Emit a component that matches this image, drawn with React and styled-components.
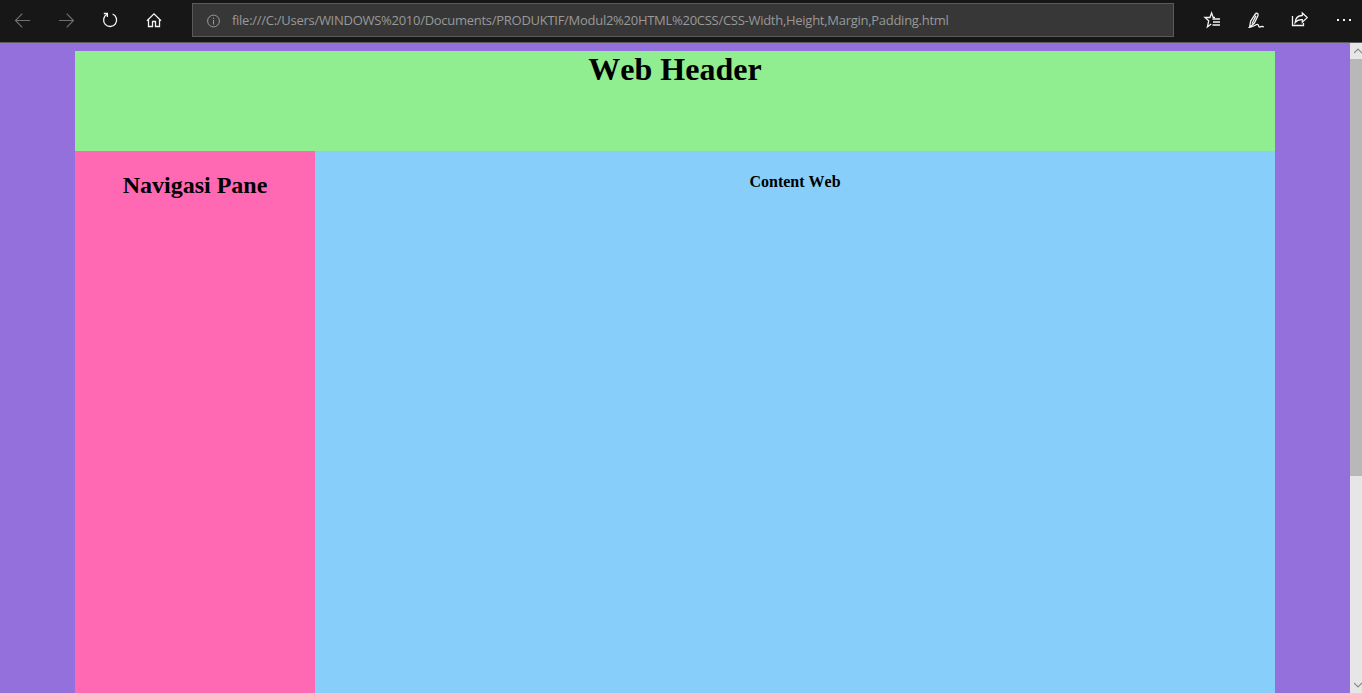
import React from "react";
import styled, { createGlobalStyle } from "styled-components";

const GlobalStyle = createGlobalStyle`
  * { box-sizing: border-box; }
  body { margin: 0; overflow: hidden; }
`;

const Window = styled.div`
  display: flex;
  flex-direction: column;
  width: 1362px;
  height: 693px;
  overflow: hidden;
`;

const Toolbar = styled.header`
  display: flex;
  flex: none;
  height: 43px;
  padding-top: 3px;
  background: #171717;
  border-bottom: 1px solid #5b5b5b;
`;

const ToolButton = styled.button`
  display: flex;
  align-items: center;
  justify-content: center;
  flex: none;
  width: 44px;
  height: 34px;
  padding: 0;
  border: 0;
  background: none;
  color: ${(p) => (p.$disabled ? "#707070" : "#f4f4f4")};
`;

const NavButtons = styled.nav`
  display: flex;
  flex: none;
  width: 192px;
`;

const Actions = styled.div`
  display: flex;
  flex: none;
  width: 188px;
  padding-left: 16px;
`;

const AddressBar = styled.div`
  display: flex;
  align-items: center;
  flex: none;
  width: 982px;
  height: 34px;
  padding-left: 13px;
  gap: 11px;
  background: #373737;
  border: 1px solid #5a5a5a;
  color: #999;
`;

const Url = styled.span`
  font: 13px/18px "Open Sans", "Noto Sans", sans-serif;
  letter-spacing: -0.275px;
  white-space: nowrap;
`;

const Icon = styled.svg`
  display: block;
  flex: none;
  fill: none;
  stroke: currentColor;
  stroke-width: ${(p) => p.$weight || 1.2};
`;

const Viewport = styled.div`
  display: flex;
  flex: 1;
  min-height: 0;
`;

const Page = styled.main`
  width: 1350px;
  padding: 8px 75px 0;
  background: #9370db;
  color: #000;
  font-family: "Liberation Serif", "Times New Roman", serif;
  font-kerning: none;
  text-align: center;
`;

const WebHeader = styled.section`
  height: 100px;
  background: #90ee90;
`;

const Columns = styled.div`
  display: flex;
  height: 542px;
`;

const NavigationPane = styled.aside`
  width: 240px;
  padding-top: 21px;
  background: #ff69b4;
`;

const Content = styled.section`
  flex: 1;
  padding-top: 21px;
  background: #87cefa;
`;

const Title = styled.h1`
  margin: 0;
  font-size: 32px;
  line-height: 37px;
`;

const PaneTitle = styled.h2`
  margin: 0;
  font-size: 24px;
  line-height: 27px;
`;

const ContentTitle = styled.h4`
  margin: 0;
  font-size: 16px;
  line-height: 19px;
`;

const Scrollbar = styled.div`
  display: flex;
  flex-direction: column;
  justify-content: space-between;
  width: 12px;
  background: #e6e6e6;
  color: #8a8a8a;
`;

const ScrollArrow = styled.div`
  display: flex;
  align-items: center;
  height: 16px;
  padding-left: 4px;
`;

const ScrollTrack = styled.div`
  flex: 1;
`;

const ScrollThumb = styled.div`
  height: 417px;
  background: #b8b8b8;
`;

export default function App() {
  return (
    <Window>
      <GlobalStyle />
      <Toolbar>
        <NavButtons>
          <ToolButton $disabled aria-label="Back">
            <Icon width="16" height="16" viewBox="0 0 16 16">
              <path d="M16 8.5H1.7M8.3 1.7L1.5 8.5L8.3 15.3" />
            </Icon>
          </ToolButton>
          <ToolButton $disabled aria-label="Forward">
            <Icon width="16" height="16" viewBox="0 0 16 16">
              <path d="M1 8.5H15.3M8.7 1.7L15.5 8.5L8.7 15.3" />
            </Icon>
          </ToolButton>
          <ToolButton aria-label="Refresh">
            <Icon width="16" height="16" viewBox="0 0 16 16" $weight={1.3}>
              <path d="M10.6 2A6.5 6.5 0 1 1 5 2.3M1.8 1.5H5.4V5" />
            </Icon>
          </ToolButton>
          <ToolButton aria-label="Home">
            <Icon width="16" height="16" viewBox="0 0 16 16" $weight={1.3}>
              <path d="M1 8.8L8 1.9L15 8.8M2.5 7.5V14.5H6.5V9.5H9.5V14.5H13.5V7.5" />
            </Icon>
          </ToolButton>
        </NavButtons>
        <AddressBar>
          <Icon width="15" height="15" viewBox="0 0 15 15" $weight={1}>
            <circle cx="7.5" cy="8" r="5.9" />
            <path d="M7.5 7V11.5M7.5 4.7V6" />
          </Icon>
          <Url>
            file:///C:/Users/WINDOWS%2010/Documents/PRODUKTIF/Modul2%20HTML%20CSS/CSS-Width,Height,Margin,Padding.html
          </Url>
        </AddressBar>
        <Actions>
          <ToolButton aria-label="Favorites">
            <Icon width="18" height="18" viewBox="0 0 18 18" $weight={1.3}>
              <path d="M12 6.5H10.2L8.6 2L6.9 6.5H2L5.7 9.8L4.4 16L8.2 13" />
              <path d="M9.5 8H17M10 11H17M9.5 14H17" />
            </Icon>
          </ToolButton>
          <ToolButton aria-label="Add notes">
            <Icon width="18" height="18" viewBox="0 0 18 18" $weight={1.3}>
              <path d="M2.6 16.3L3.6 10.2L8.2 3.2C9.4 1.4 11.6 2.4 11 4.5L7.4 12L2.6 16.3C6.4 16 8.9 13 10.7 13.4C12.2 13.8 10.9 16.2 12.7 16C14.2 15.8 14.6 15 16.8 15.8" />
              <path d="M9 4.6L5 12.8" />
            </Icon>
          </ToolButton>
          <ToolButton aria-label="Share">
            <Icon width="18" height="18" viewBox="0 0 18 18" $weight={1.3}>
              <path d="M1.5 5V14.5H12.5V12" />
              <path d="M11.3 2L16.2 6.6L11.3 11.2V8.7C7.6 8.5 5.8 9.4 4.1 11.7C4.4 7.2 7 4.7 11.3 4.5V2Z" />
            </Icon>
          </ToolButton>
          <ToolButton aria-label="More">
            <Icon width="16" height="16" viewBox="0 0 16 16" $weight={2}>
              <path d="M1 8H3M7 8H9M13 8H15" />
            </Icon>
          </ToolButton>
        </Actions>
      </Toolbar>
      <Viewport>
        <Page>
          <WebHeader>
            <Title>Web Header</Title>
          </WebHeader>
          <Columns>
            <NavigationPane>
              <PaneTitle>Navigasi Pane</PaneTitle>
            </NavigationPane>
            <Content>
              <ContentTitle>Content Web</ContentTitle>
            </Content>
          </Columns>
        </Page>
        <Scrollbar>
          <ScrollArrow>
            <Icon width="8" height="6" viewBox="0 0 8 6">
              <path d="M0 5L4 1L8 5" />
            </Icon>
          </ScrollArrow>
          <ScrollTrack>
            <ScrollThumb />
          </ScrollTrack>
          <ScrollArrow>
            <Icon width="8" height="6" viewBox="0 0 8 6">
              <path d="M0 1L4 5L8 1" />
            </Icon>
          </ScrollArrow>
        </Scrollbar>
      </Viewport>
    </Window>
  );
}
